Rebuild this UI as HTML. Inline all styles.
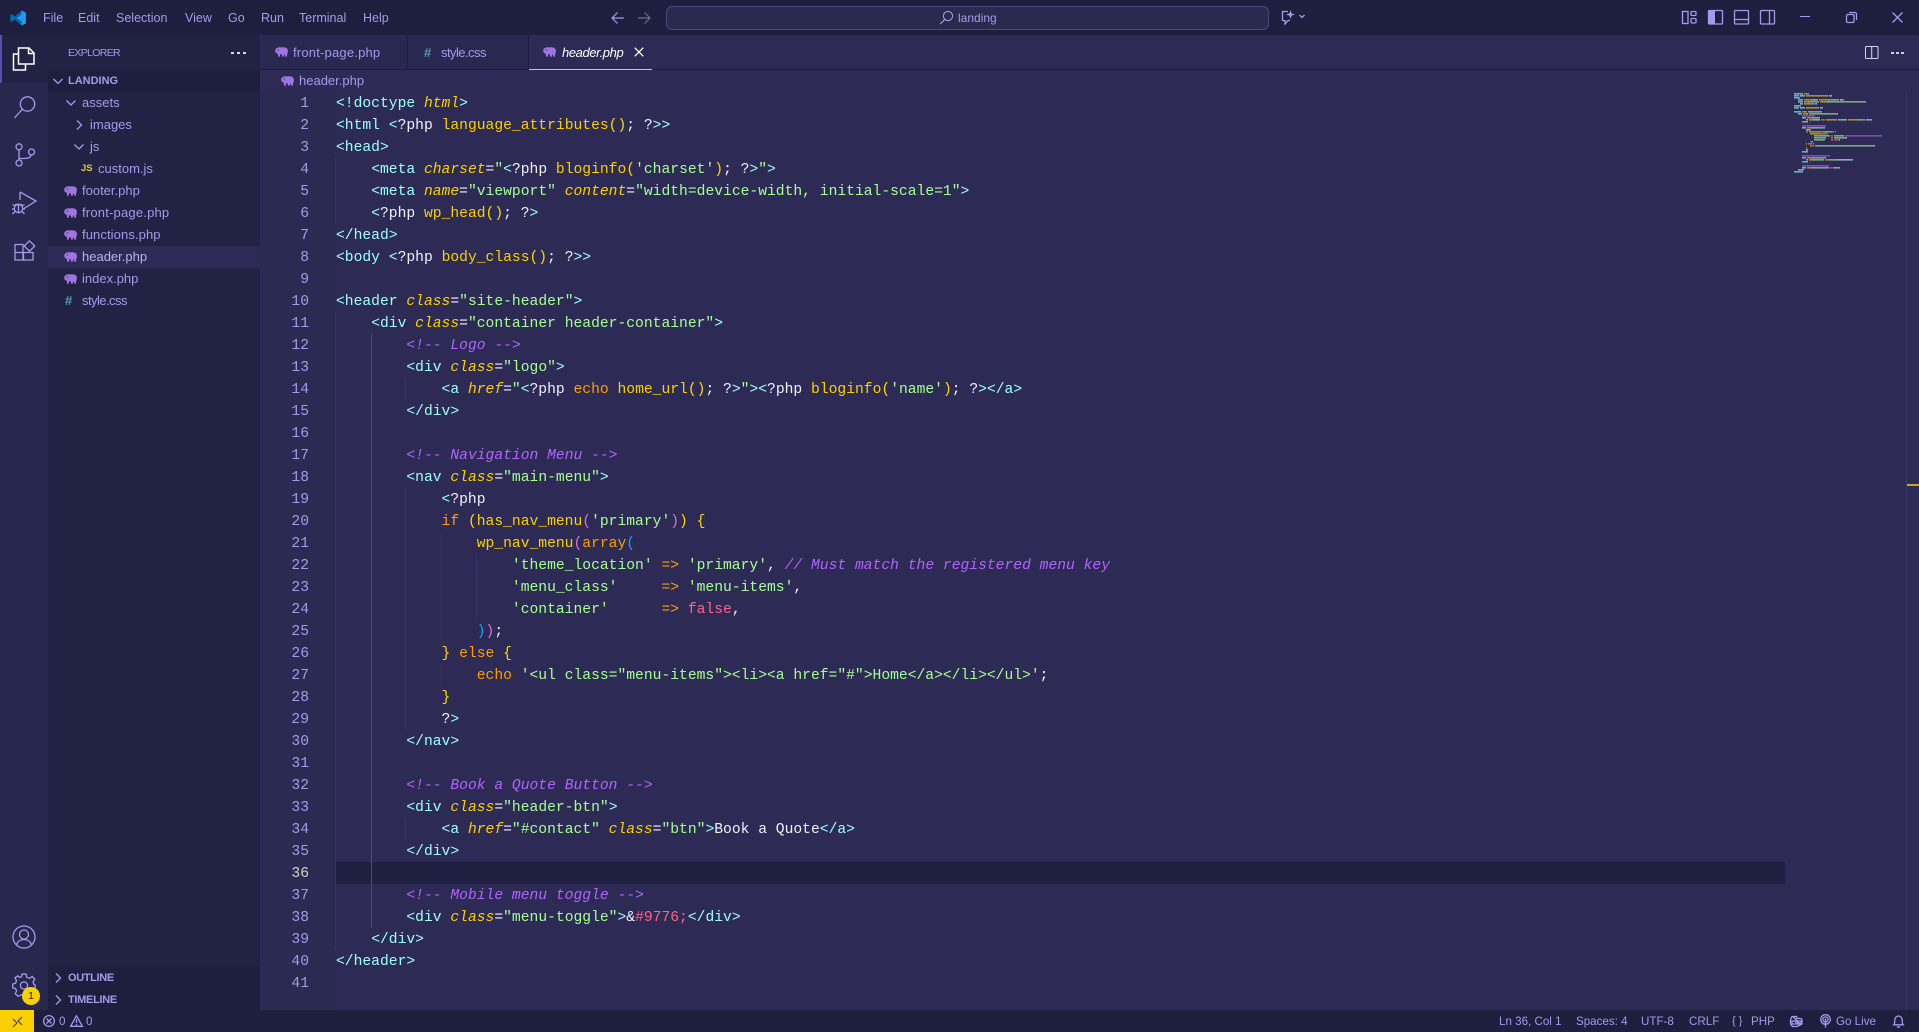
<!DOCTYPE html>
<html><head><meta charset="utf-8"><title>header.php - landing</title>
<style>
*{box-sizing:border-box}
html,body{margin:0;padding:0;width:1919px;height:1032px;overflow:hidden;background:#2d2b55;font-family:"Liberation Sans",sans-serif;font-size:13px;color:#a599e9}
#root{position:relative;width:1919px;height:1032px;overflow:hidden}
.a{position:absolute}
.m{position:absolute;top:9px;line-height:18px;font-size:12.5px;color:#a599e9}
.row{position:absolute;left:48px;width:212px;height:22px;line-height:22px;font-size:13px;color:#a599e9;white-space:pre}
.row span{position:absolute;top:0}
.row svg{position:absolute}
svg{display:block;overflow:visible}
.code,.gut{position:absolute;top:93px;font-family:"Liberation Mono",monospace;font-size:14.667px;line-height:22px}
.code{left:336px;color:#e8e6ff}
.code div{white-space:pre}
.code div,.gut div{height:22px}
.gut{left:260px;width:49px;text-align:right;color:#a599e9}
.t{color:#9effff}.at{color:#fad000;font-style:italic}.s{color:#a5ff90}.c{color:#b362ff;font-style:italic}.k{color:#ff9d00}.f{color:#fad000}.w{color:#f2f0ff}.y{color:#ffd700}.p{color:#da70d6}.b{color:#179fff}.r{color:#ff628c}
.ig{position:absolute;width:1px;background:#4b4985}
.ig2{position:absolute;width:1px;background:#343265}
.st{position:absolute;top:1010px;height:22px;line-height:23px;font-size:11.6px;color:#a599e9;white-space:pre}
.tab{position:absolute;top:35px;height:35px;line-height:35px;font-size:13px;color:#a599e9}
.ic{fill:none;stroke:#a599e9;stroke-width:1.3}
</style></head>
<body><div id="root">
<svg width="0" height="0" style="position:absolute"><defs>
<symbol id="php" viewBox="0 0 13 10"><path fill="#a074e0" d="M2.6 0.6C4 -0.1 5 .4 6 .4C7.6 .1 9.4 .1 10.6 .6C12.2 1.1 13 2.4 12.9 4C12.9 5.4 12.7 6.8 12 7.2L12.2 9.6H10.2L9.8 7.6H9L8.9 9.6H6.9V7.4C6.2 7.5 5.6 7.4 5 7.2L4.9 9.6H3L2.9 6.8C1.4 6.6 .3 5.6 .2 4C.1 2.4 1 1.2 2.6 .6Z"/><circle cx="3.4" cy="3" r=".6" fill="#222244"/></symbol>
</defs></svg>

<!-- title bar -->
<div class="a" style="left:0;top:0;width:1919px;height:35px;background:#1e1e3f"></div>
<svg class="a" style="left:10px;top:10px" width="16" height="16" viewBox="0 0 16 16"><path fill="#0065a9" d="M11.5 .5L15.8 2.6V13.4L11.5 15.5L5 9.6L1.8 12L.3 11.2V4.8L1.8 4L5 6.4Z"/><path fill="#1f9cf0" d="M11.5 .5L15.8 2.6V13.4L11.5 15.5ZM11.5 4.6L6.6 8L11.5 11.4Z" /><path fill="#007acc" d="M1.8 5.8L4 8L1.8 10.2Z"/></svg>
<div class="m" style="left:43px">File</div><div class="m" style="left:78px">Edit</div><div class="m" style="left:116px">Selection</div><div class="m" style="left:185px">View</div><div class="m" style="left:228px">Go</div><div class="m" style="left:261px">Run</div><div class="m" style="left:299px">Terminal</div><div class="m" style="left:363px">Help</div>

<svg class="a" style="left:611px;top:11px" width="14" height="14" viewBox="0 0 14 14"><path fill="none" stroke="#a599e9" stroke-width="1.2" d="M13 7H1M6.5 1.5L1 7L6.5 12.5"/></svg>
<svg class="a" style="left:637px;top:11px" width="14" height="14" viewBox="0 0 14 14"><path fill="none" stroke="#6e6a9c" stroke-width="1.2" d="M1 7H13M7.5 1.5L13 7L7.5 12.5"/></svg>
<div class="a" style="left:666px;top:6px;width:603px;height:24px;background:#2a2a4e;border:1px solid #4a4880;border-radius:6px"></div>
<svg class="a" style="left:939px;top:10px" width="15" height="15" viewBox="0 0 15 15"><circle cx="9" cy="6" r="4.6" fill="none" stroke="#a599e9" stroke-width="1.1"/><path d="M5.8 9.4L1.2 14" stroke="#a599e9" stroke-width="1.2"/></svg>
<div class="a" style="left:958px;top:9px;line-height:19px;font-size:12px;color:#a599e9">landing</div>
<svg class="a" style="left:1281px;top:9px" width="26" height="16" viewBox="0 0 26 16"><path class="ic" d="M7 2.5H1.5V11.5H4V15L7 11.5H9"/><path fill="#a599e9" d="M9.5 1L10.6 4.4L14 5.5L10.6 6.6L9.5 10L8.4 6.6L5 5.5L8.4 4.4Z"/><path class="ic" d="M18.5 6L21 8.5L23.5 6" stroke-width="1"/></svg>

<!-- layout icons -->
<svg class="a" style="left:1682px;top:10px" width="15" height="15" viewBox="0 0 15 15"><rect x=".5" y="1.5" width="5.5" height="12" class="ic" stroke-width="1"/><rect x="9" y="1.5" width="5" height="4" rx="1" class="ic" stroke-width="1"/><rect x="9" y="8.5" width="5" height="4.5" rx="1" class="ic" stroke-width="1"/></svg>
<svg class="a" style="left:1708px;top:10px" width="15" height="15" viewBox="0 0 15 15"><rect x=".5" y=".5" width="14" height="13.5" rx="1" class="ic" stroke-width="1"/><rect x="1" y="1" width="6" height="12.5" fill="#a599e9"/></svg>
<svg class="a" style="left:1734px;top:10px" width="15" height="15" viewBox="0 0 15 15"><rect x=".5" y=".5" width="14" height="13.5" rx="1" class="ic" stroke-width="1"/><path d="M1 9.5H14" class="ic" stroke-width="1"/></svg>
<svg class="a" style="left:1760px;top:10px" width="15" height="15" viewBox="0 0 15 15"><rect x=".5" y=".5" width="14" height="13.5" rx="1" class="ic" stroke-width="1"/><path d="M9.5 1V14" class="ic" stroke-width="1"/></svg>
<div class="a" style="left:1800px;top:16px;width:10px;height:1px;background:#a599e9"></div>
<svg class="a" style="left:1846px;top:12px" width="11" height="11" viewBox="0 0 11 11"><rect x=".5" y="2.5" width="7.5" height="8" rx="1.2" class="ic" stroke-width="1"/><path d="M3 .5H8.5Q10.5 .5 10.5 2.5V8" class="ic" stroke-width="1"/></svg>
<svg class="a" style="left:1892px;top:12px" width="11" height="11" viewBox="0 0 11 11"><path d="M.5 .5L10.5 10.5M10.5 .5L.5 10.5" class="ic" stroke-width="1"/></svg>

<!-- activity bar -->
<div class="a" style="left:0;top:35px;width:48px;height:975px;background:#28284e"></div>
<div class="a" style="left:0;top:35px;width:48px;height:48px;background:#222244"></div>
<div class="a" style="left:0;top:35px;width:2px;height:48px;background:#5a4fb0"></div>
<svg class="a" style="left:12px;top:47px" width="24" height="24" viewBox="0 0 24 24"><path fill="none" stroke="#fff" stroke-width="1.5" d="M6.5 1H17L22 6V17H6.5ZM16.5 1V6.5H22M6 7H1.5V23H13.5V17"/></svg>
<svg class="a" style="left:13px;top:95px" width="24" height="24" viewBox="0 0 24 24"><circle cx="14.5" cy="9" r="7.2" class="ic" stroke-width="1.5"/><path d="M9.5 14L1.5 23" class="ic" stroke-width="1.5"/></svg>
<svg class="a" style="left:13px;top:143px" width="24" height="24" viewBox="0 0 24 24"><circle cx="6" cy="3.8" r="3" class="ic" stroke-width="1.5"/><circle cx="6" cy="20" r="3" class="ic" stroke-width="1.5"/><circle cx="18.5" cy="9" r="3" class="ic" stroke-width="1.5"/><path d="M6 7V17M6 15.5C12 15.5 17.5 16 18 12" class="ic" stroke-width="1.5"/></svg>
<svg class="a" style="left:11px;top:190px" width="26" height="26" viewBox="0 0 26 26"><path d="M9 2L25 11L13 18.5M9 2V10" class="ic" stroke-width="1.5"/><circle cx="7.5" cy="18.5" r="4.2" class="ic" stroke-width="1.5"/><path d="M1.5 14.5L4 16M1 19H3.5M1.5 24L4 21.5M13.5 14.5L11 16M14 19H11.5M13.5 24L11 21.5M4 14.5H11M7.5 15V23" class="ic" stroke-width="1.3"/></svg>
<svg class="a" style="left:14px;top:240px" width="22" height="22" viewBox="0 0 22 22"><path d="M1 4.5H9V20H1ZM1 12.5H19V20H1ZM9.5 12V20" class="ic" stroke-width="1.5" /><path d="M15.5 .8L20.8 6L15.5 11.2L10.2 6Z" class="ic" stroke-width="1.5"/></svg>
<svg class="a" style="left:12px;top:925px" width="24" height="24" viewBox="0 0 24 24"><circle cx="12" cy="12" r="11" class="ic" stroke-width="1.5"/><circle cx="12" cy="9.5" r="4.5" class="ic" stroke-width="1.5"/><path d="M4.5 19.5C6 15.5 9 14.5 12 14.5S18 15.5 19.5 19.5" class="ic" stroke-width="1.5"/></svg>
<svg class="a" style="left:12px;top:973px" width="24" height="24" viewBox="0 0 24 24"><path d="M10 1H14L14.7 4.2L17.4 5.3L20.2 3.5L22.8 6.2L21 9L22 11.6L23.2 12V16L20.4 16.6L19.6 18.8L21 21.3L18.3 23.2L15 21.8L9 22L6 23.2L3.2 20.7L4.6 18L3.6 15.6L.8 15V11L3.6 10.2L4.5 7.6L3 4.8L5.6 2.8L8 4.4L9.6 3.8Z" class="ic" stroke-width="1.4"/><circle cx="12" cy="12.5" r="3.6" class="ic" stroke-width="1.4"/></svg>
<div class="a" style="left:22px;top:987px;width:18px;height:18px;border-radius:50%;background:#fad000;color:#1e1e3f;font-size:10.5px;line-height:18px;text-align:center">1</div>

<!-- sidebar -->
<div class="a" style="left:48px;top:35px;width:212px;height:975px;background:#222244"></div>
<div class="a" style="left:68px;top:43px;line-height:20px;font-size:10.5px;letter-spacing:-.65px;color:#a599e9">EXPLORER</div>
<div class="a" style="left:231px;top:52px;width:3px;height:2px;background:#d8d4ff;box-shadow:6px 0 0 #d8d4ff,12px 0 0 #d8d4ff"></div>
<div class="a" style="left:48px;top:70px;width:212px;height:22px;background:#1e1e3f"></div>
<svg class="a" style="left:53px;top:76px" width="10" height="10" viewBox="0 0 10 10"><path d="M.5 3L5 7.5L9.5 3" class="ic"/></svg>
<div class="a" style="left:68px;top:70px;line-height:22px;font-size:11px;font-weight:bold;color:#a599e9">LANDING</div>

<div class="row" style="top:92px"><svg style="left:18px;top:7px" width="10" height="8" viewBox="0 0 10 8"><path d="M.5 1.5L5 6L9.5 1.5" class="ic"/></svg><span style="left:34px">assets</span></div>
<div class="row" style="top:114px"><svg style="left:28px;top:6px" width="7" height="10" viewBox="0 0 7 10"><path d="M1 .5L5.5 5L1 9.5" class="ic"/></svg><span style="left:42px">images</span></div>
<div class="row" style="top:136px"><svg style="left:26px;top:7px" width="10" height="8" viewBox="0 0 10 8"><path d="M.5 1.5L5 6L9.5 1.5" class="ic"/></svg><span style="left:42px">js</span></div>
<div class="row" style="top:158px"><span style="left:33px;font-size:9.5px;font-weight:bold;color:#d8c83e">JS</span><span style="left:50px">custom.js</span></div>
<div class="row" style="top:180px"><svg style="left:16px;top:6px" width="13" height="10"><use href="#php"/></svg><span style="left:34px">footer.php</span></div>
<div class="row" style="top:202px"><svg style="left:16px;top:6px" width="13" height="10"><use href="#php"/></svg><span style="left:34px;letter-spacing:.2px">front-page.php</span></div>
<div class="row" style="top:224px"><svg style="left:16px;top:6px" width="13" height="10"><use href="#php"/></svg><span style="left:34px;letter-spacing:.1px">functions.php</span></div>
<div class="row" style="top:246px;background:#2d2b55"><svg style="left:16px;top:6px" width="13" height="10"><use href="#php"/></svg><span style="left:34px;color:#b9b4e0">header.php</span></div>
<div class="row" style="top:268px"><svg style="left:16px;top:6px" width="13" height="10"><use href="#php"/></svg><span style="left:34px">index.php</span></div>
<div class="row" style="top:290px"><span style="left:17px;font-weight:bold;color:#519aba">#</span><span style="left:34px;letter-spacing:-.55px">style.css</span></div>

<div class="a" style="left:48px;top:966px;width:212px;height:44px;background:#1e1e3f"></div>
<svg class="a" style="left:55px;top:973px" width="7" height="10" viewBox="0 0 7 10"><path d="M1 .5L5.5 5L1 9.5" class="ic"/></svg>
<div class="a" style="left:68px;top:967px;line-height:22px;font-size:11px;font-weight:bold;letter-spacing:-.35px;color:#a599e9">OUTLINE</div>
<svg class="a" style="left:55px;top:995px" width="7" height="10" viewBox="0 0 7 10"><path d="M1 .5L5.5 5L1 9.5" class="ic"/></svg>
<div class="a" style="left:68px;top:989px;line-height:22px;font-size:11px;font-weight:bold;letter-spacing:-.3px;color:#a599e9">TIMELINE</div>

<!-- tabs -->
<div class="a" style="left:260px;top:35px;width:1659px;height:35px;background:#2d2b55;border-bottom:1px solid #1e1e3f"></div>
<div class="tab" style="left:261px;width:147px;background:#292850;border-right:1px solid #1e1e3f;border-bottom:1px solid #1e1e3f"><svg class="a" style="left:14px;top:12px" width="13" height="10"><use href="#php"/></svg><span class="a" style="left:32px;white-space:pre;letter-spacing:.2px">front-page.php</span></div>
<div class="tab" style="left:408px;width:121px;background:#292850;border-right:1px solid #1e1e3f;border-bottom:1px solid #1e1e3f"><span class="a" style="left:16px;font-weight:bold;color:#519aba">#</span><span class="a" style="left:33px;white-space:pre;letter-spacing:-.55px">style.css</span></div>
<div class="tab" style="left:529px;width:123px;background:#2d2b55;border-bottom:1px solid #fad000;color:#fff"><svg class="a" style="left:14px;top:12px" width="13" height="10"><use href="#php"/></svg><span class="a" style="left:33px;white-space:pre;font-style:italic;letter-spacing:-.4px">header.php</span><svg class="a" style="left:105px;top:12px" width="10" height="10" viewBox="0 0 10 10"><path d="M.7 .7L9.3 9.3M9.3 .7L.7 9.3" fill="none" stroke="#fff" stroke-width="1.3"/></svg></div>
<svg class="a" style="left:1865px;top:46px" width="14" height="13" viewBox="0 0 14 13"><rect x=".5" y=".5" width="12.5" height="12" rx="1" fill="none" stroke="#d8d4f0" stroke-width="1"/><path d="M6.7 1V12" stroke="#d8d4f0" stroke-width="1"/></svg>
<div class="a" style="left:1891px;top:52px;width:3px;height:2px;background:#d8c8e0;box-shadow:5px 0 0 #d8c8e0,10px 0 0 #d8c8e0"></div>

<!-- breadcrumb -->
<svg class="a" style="left:281px;top:76px" width="13" height="10"><use href="#php"/></svg>
<div class="a" style="left:299px;top:70px;line-height:22px;font-size:13px;color:#a599e9">header.php</div>

<!-- editor -->
<div class="a" style="left:260px;top:92px;width:75px;height:918px;background:#2b2a52"></div>
<div class="a" style="left:335px;top:862px;width:1450px;height:22px;background:#1f1f41"></div>
<div class="ig2" style="left:335px;top:158px;height:66px"></div>
<div class="ig2" style="left:335px;top:312px;height:638px"></div>
<div class="ig" style="left:371px;top:334px;height:594px"></div>
<div class="ig2" style="left:405px;top:378px;height:22px"></div>
<div class="ig2" style="left:405px;top:488px;height:242px"></div>
<div class="ig2" style="left:405px;top:818px;height:22px"></div>
<div class="ig2" style="left:441px;top:532px;height:110px"></div>
<div class="ig2" style="left:441px;top:664px;height:22px"></div>
<div class="ig2" style="left:476px;top:554px;height:66px"></div>

<div class="gut"><div>1</div><div>2</div><div>3</div><div>4</div><div>5</div><div>6</div><div>7</div><div>8</div><div>9</div><div>10</div><div>11</div><div>12</div><div>13</div><div>14</div><div>15</div><div>16</div><div>17</div><div>18</div><div>19</div><div>20</div><div>21</div><div>22</div><div>23</div><div>24</div><div>25</div><div>26</div><div>27</div><div>28</div><div>29</div><div>30</div><div>31</div><div>32</div><div>33</div><div>34</div><div>35</div><div style="color:#d8d4c0">36</div><div>37</div><div>38</div><div>39</div><div>40</div><div>41</div></div>
<div class="code">
<div><span class="t">&lt;!doctype</span> <span class="at">html</span><span class="t">&gt;</span></div>
<div><span class="t">&lt;html</span> <span class="t">&lt;</span><span class="w">?php</span> <span class="f">language_attributes</span><span class="y">()</span><span class="w">;</span> <span class="w">?</span><span class="t">&gt;&gt;</span></div>
<div><span class="t">&lt;head&gt;</span></div>
<div>    <span class="t">&lt;meta</span> <span class="at">charset</span><span class="w">=</span><span class="s">"</span><span class="t">&lt;</span><span class="w">?php</span> <span class="f">bloginfo</span><span class="y">(</span><span class="s">'charset'</span><span class="y">)</span><span class="w">;</span> <span class="w">?</span><span class="t">&gt;</span><span class="s">"</span><span class="t">&gt;</span></div>
<div>    <span class="t">&lt;meta</span> <span class="at">name</span><span class="w">=</span><span class="s">"viewport"</span> <span class="at">content</span><span class="w">=</span><span class="s">"width=device-width, initial-scale=1"</span><span class="t">&gt;</span></div>
<div>    <span class="t">&lt;</span><span class="w">?php</span> <span class="f">wp_head</span><span class="y">()</span><span class="w">;</span> <span class="w">?</span><span class="t">&gt;</span></div>
<div><span class="t">&lt;/head&gt;</span></div>
<div><span class="t">&lt;body</span> <span class="t">&lt;</span><span class="w">?php</span> <span class="f">body_class</span><span class="y">()</span><span class="w">;</span> <span class="w">?</span><span class="t">&gt;&gt;</span></div>
<div></div>
<div><span class="t">&lt;header</span> <span class="at">class</span><span class="w">=</span><span class="s">"site-header"</span><span class="t">&gt;</span></div>
<div>    <span class="t">&lt;div</span> <span class="at">class</span><span class="w">=</span><span class="s">"container header-container"</span><span class="t">&gt;</span></div>
<div>        <span class="c">&lt;!-- Logo --&gt;</span></div>
<div>        <span class="t">&lt;div</span> <span class="at">class</span><span class="w">=</span><span class="s">"logo"</span><span class="t">&gt;</span></div>
<div>            <span class="t">&lt;a</span> <span class="at">href</span><span class="w">=</span><span class="s">"</span><span class="t">&lt;</span><span class="w">?php</span> <span class="k">echo</span> <span class="f">home_url</span><span class="y">()</span><span class="w">;</span> <span class="w">?</span><span class="t">&gt;</span><span class="s">"</span><span class="t">&gt;</span><span class="t">&lt;</span><span class="w">?php</span> <span class="f">bloginfo</span><span class="y">(</span><span class="s">'name'</span><span class="y">)</span><span class="w">;</span> <span class="w">?</span><span class="t">&gt;&lt;/a&gt;</span></div>
<div>        <span class="t">&lt;/div&gt;</span></div>
<div></div>
<div>        <span class="c">&lt;!-- Navigation Menu --&gt;</span></div>
<div>        <span class="t">&lt;nav</span> <span class="at">class</span><span class="w">=</span><span class="s">"main-menu"</span><span class="t">&gt;</span></div>
<div>            <span class="t">&lt;</span><span class="w">?php</span></div>
<div>            <span class="k">if</span> <span class="y">(</span><span class="f">has_nav_menu</span><span class="p">(</span><span class="s">'primary'</span><span class="p">)</span><span class="y">)</span> <span class="y">{</span></div>
<div>                <span class="f">wp_nav_menu</span><span class="p">(</span><span class="k">array</span><span class="b">(</span></div>
<div>                    <span class="s">'theme_location'</span> <span class="k">=&gt;</span> <span class="s">'primary'</span><span class="w">,</span> <span class="c">// Must match the registered menu key</span></div>
<div>                    <span class="s">'menu_class'</span>     <span class="k">=&gt;</span> <span class="s">'menu-items'</span><span class="w">,</span></div>
<div>                    <span class="s">'container'</span>      <span class="k">=&gt;</span> <span class="r">false</span><span class="w">,</span></div>
<div>                <span class="b">)</span><span class="p">)</span><span class="w">;</span></div>
<div>            <span class="y">}</span> <span class="k">else</span> <span class="y">{</span></div>
<div>                <span class="k">echo</span> <span class="s">'&lt;ul class="menu-items"&gt;&lt;li&gt;&lt;a href="#"&gt;Home&lt;/a&gt;&lt;/li&gt;&lt;/ul&gt;'</span><span class="w">;</span></div>
<div>            <span class="y">}</span></div>
<div>            <span class="w">?</span><span class="t">&gt;</span></div>
<div>        <span class="t">&lt;/nav&gt;</span></div>
<div></div>
<div>        <span class="c">&lt;!-- Book a Quote Button --&gt;</span></div>
<div>        <span class="t">&lt;div</span> <span class="at">class</span><span class="w">=</span><span class="s">"header-btn"</span><span class="t">&gt;</span></div>
<div>            <span class="t">&lt;a</span> <span class="at">href</span><span class="w">=</span><span class="s">"#contact"</span> <span class="at">class</span><span class="w">=</span><span class="s">"btn"</span><span class="t">&gt;</span><span class="w">Book a Quote</span><span class="t">&lt;/a&gt;</span></div>
<div>        <span class="t">&lt;/div&gt;</span></div>
<div></div>
<div>        <span class="c">&lt;!-- Mobile menu toggle --&gt;</span></div>
<div>        <span class="t">&lt;div</span> <span class="at">class</span><span class="w">=</span><span class="s">"menu-toggle"</span><span class="t">&gt;</span><span class="w">&amp;</span><span class="r">#9776;</span><span class="t">&lt;/div&gt;</span></div>
<div>    <span class="t">&lt;/div&gt;</span></div>
<div><span class="t">&lt;/header&gt;</span></div>
<div></div>
</div>

<!-- minimap -->
<svg class="a" style="left:1794px;top:92px;opacity:.6;filter:blur(.35px)" width="90" height="84" viewBox="0 0 90 84" fill="none" stroke-width="1.6">
<path stroke="#9effff" d="M0 1.8h9M14 1.8h1M0 3.8h5M8 3.8h3M37 3.8h1M0 5.8h6M4 7.8h5M21 7.8h3M49 7.8h1M4 9.8h5M71 9.8h1M6 11.8h3M0 13.8h7M0 15.8h5M8 15.8h3M28 15.8h1M0 19.8h7M27 19.8h1M4 21.8h4M43 21.8h1M8 25.8h4M25 25.8h1M12 27.8h2M23 27.8h3M47 27.8h1M50 27.8h3M74 27.8h4M8 29.8h6M8 35.8h4M30 35.8h1M14 37.8h3M8 59.8h6M8 65.8h4M31 65.8h1M12 67.8h2M42 67.8h1M55 67.8h4M8 69.8h6M8 75.8h4M32 75.8h1M40 75.8h6M4 77.8h6M0 79.8h9"/>
<path stroke="#fad000" d="M10 1.8h4M12 3.8h21M10 7.8h7M25 7.8h9M43 7.8h1M10 9.8h4M26 9.8h7M10 11.8h9M12 15.8h12M8 19.8h5M9 21.8h5M13 25.8h5M15 27.8h4M32 27.8h10M54 27.8h9M69 27.8h1M13 35.8h5M15 39.8h13M39 39.8h1M41 39.8h1M16 41.8h11M12 51.8h1M19 51.8h1M12 55.8h1M13 65.8h5M15 67.8h4M31 67.8h5M13 75.8h5"/>
<path stroke="#a5ff90" d="M18 7.8h1M34 7.8h9M48 7.8h1M15 9.8h10M34 9.8h37M14 19.8h13M15 21.8h28M19 25.8h6M20 27.8h1M46 27.8h1M63 27.8h6M19 35.8h11M29 39.8h9M20 43.8h16M40 43.8h9M20 45.8h12M40 45.8h12M20 47.8h11M21 53.8h59M19 65.8h12M20 67.8h10M37 67.8h5M19 75.8h13"/>
<path stroke="#b362ff" d="M8 23.8h13M8 33.8h24M8 63.8h28M8 73.8h27M51 43.8h37"/>
<path stroke="#f2f0ff" d="M6 3.8h2M33 3.8h1M35 3.8h2M17 7.8h1M19 7.8h2M44 7.8h1M46 7.8h2M14 9.8h1M33 9.8h1M19 11.8h1M21 11.8h2M6 15.8h2M24 15.8h1M26 15.8h2M13 21.8h1M18 25.8h1M19 27.8h1M21 27.8h2M42 27.8h1M44 27.8h2M48 27.8h2M70 27.8h1M72 27.8h2M18 35.8h1M12 37.8h2M49 43.8h1M52 45.8h1M45 47.8h1M18 49.8h1M80 53.8h1M12 57.8h2M18 65.8h1M19 67.8h1M36 67.8h1M43 67.8h12M18 75.8h1M33 75.8h1"/>
<path stroke="#ff9d00" d="M27 27.8h4M12 39.8h2M28 41.8h5M37 43.8h2M37 45.8h2M37 47.8h2M14 51.8h4M16 53.8h4"/>
<path stroke="#da70d6" d="M28 39.8h1M38 39.8h1M27 41.8h1M17 49.8h1"/>
<path stroke="#179fff" d="M33 41.8h1M16 49.8h1"/>
<path stroke="#ff628c" d="M40 47.8h5M34 75.8h6"/>
</svg>
<div class="a" style="left:1906px;top:92px;width:1px;height:918px;background:#383663"></div>
<div class="a" style="left:1907px;top:484px;width:12px;height:2px;background:#c8a818"></div>

<!-- status bar -->
<div class="a" style="left:0;top:1010px;width:1919px;height:22px;background:#1e1e3f"></div>
<div class="a" style="left:0;top:1010px;width:34px;height:22px;background:#fad000"></div>
<svg class="a" style="left:12px;top:1014px" width="11" height="14" viewBox="0 0 11 14"><path d="M1 5L5 9L1 13M10 3L6 7L10 11" fill="none" stroke="#3a3a5a" stroke-width="1"/></svg>
<svg class="a" style="left:43px;top:1015px" width="12" height="12" viewBox="0 0 12 12"><circle cx="6" cy="6" r="5.4" class="ic" stroke-width="1"/><path d="M3.5 3.5L8.5 8.5M8.5 3.5L3.5 8.5" class="ic" stroke-width="1"/></svg>
<div class="st" style="left:59px">0</div>
<svg class="a" style="left:70px;top:1015px" width="13" height="12" viewBox="0 0 13 12"><path d="M6.5 .8L12.4 11.3H.6Z" class="ic" stroke-width="1"/><path d="M6.5 4.2V8M6.5 9V10.2" class="ic" stroke-width="1"/></svg>
<div class="st" style="left:86px">0</div>
<div class="st" style="left:1499px">Ln 36, Col 1</div>
<div class="st" style="left:1576px">Spaces: 4</div>
<div class="st" style="left:1641px">UTF-8</div>
<div class="st" style="left:1689px">CRLF</div>
<div class="st" style="left:1732px;font-size:11px">{ }</div>
<div class="st" style="left:1751px">PHP</div>
<svg class="a" style="left:1789px;top:1015px" width="15" height="12" viewBox="0 0 15 12"><path d="M3 1.5H7.5L8 3.5H11.5Q13 3.5 13 6V9L8 11.5H3.5L1.5 9V4.5Z" class="ic" stroke-width="1.2"/><path d="M3 6H7V9H3ZM8.5 6H12V9H8.5ZM4 1.5L12 10" class="ic" stroke-width="1.1"/></svg>
<svg class="a" style="left:1820px;top:1014px" width="11" height="14" viewBox="0 0 11 14"><circle cx="5.5" cy="5.5" r="4.8" class="ic" stroke-width="1"/><circle cx="5.5" cy="5.5" r="2.6" class="ic" stroke-width="1"/><circle cx="5.5" cy="5.5" r="1" fill="#a599e9"/><path d="M5.5 6V13.5" class="ic" stroke-width="1.3"/></svg>
<div class="st" style="left:1836px">Go Live</div>
<svg class="a" style="left:1893px;top:1015px" width="11" height="13" viewBox="0 0 11 13"><path d="M.8 9.8C1.8 8.5 1.8 7 1.8 5.2C1.8 2.8 3.4 1 5.5 1S9.2 2.8 9.2 5.2C9.2 7 9.2 8.5 10.2 9.8ZM4 11.5Q5.5 12.8 7 11.5" class="ic" stroke-width="1"/></svg>
</div></body></html>
